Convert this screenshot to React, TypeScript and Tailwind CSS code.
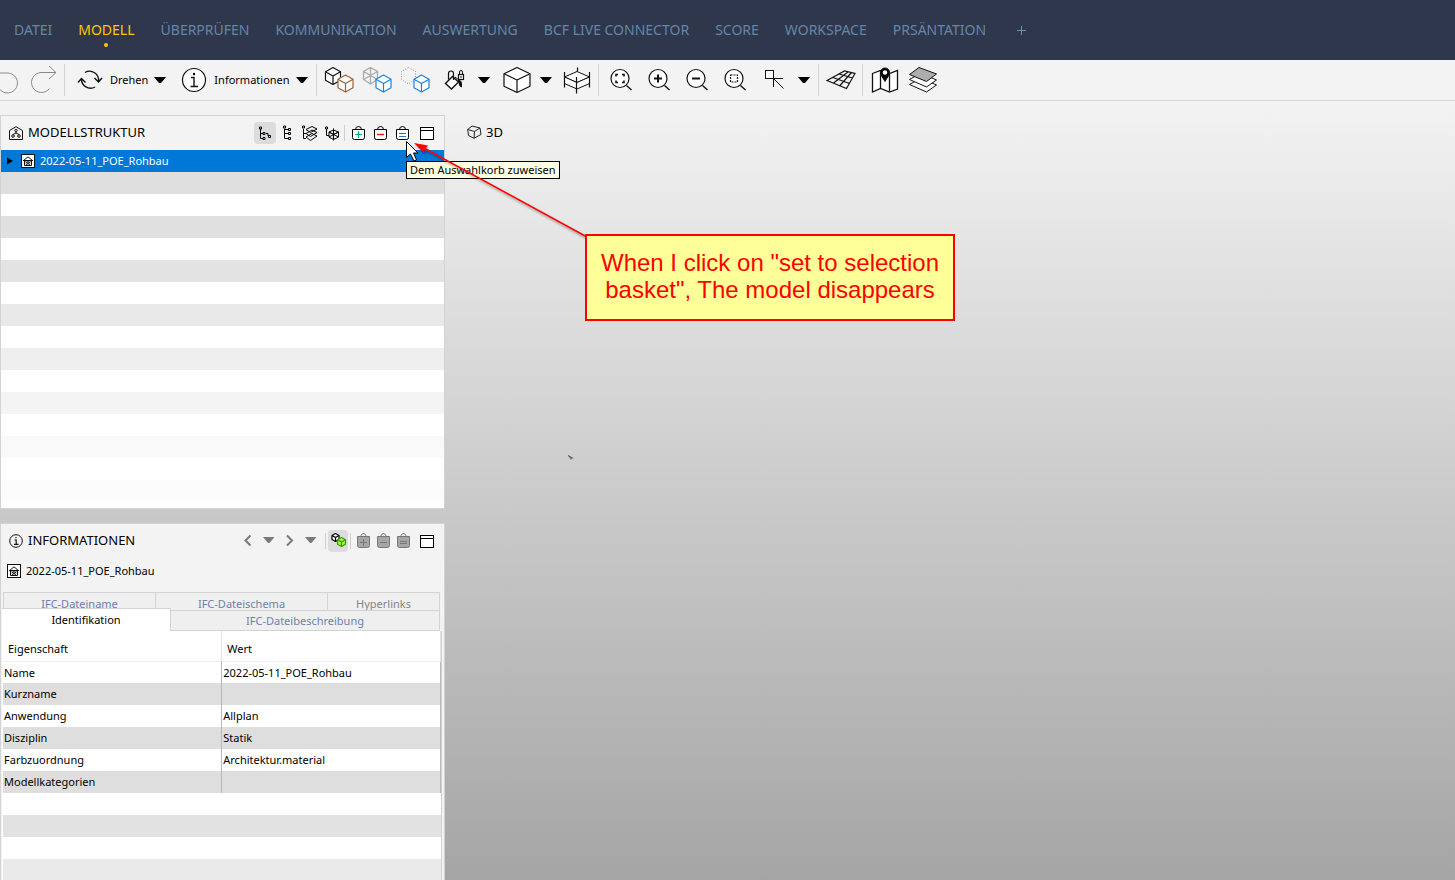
import React from "react";

interface CellProps {
  label: string;
  width?: number;
  className?: string;
  children: React.ReactNode;
}

// toolbar button: the icon is drawn on a 40px high cell
const ToolButton: React.FC<CellProps> = ({ label, width = 38, children }) => (
  <button type="button" aria-label={label} className="shrink-0 hover:bg-gray-200">
    <svg width={width} height={40} viewBox={`0 0 ${width} 40`} fill="none" stroke="#111">
      {children}
    </svg>
  </button>
);

const PanelButton: React.FC<CellProps> = ({ label, width = 22, className = "", children }) => (
  <button type="button" aria-label={label} className={`shrink-0 ${className}`}>
    <svg width={width} height={22} viewBox={`0 0 ${width} 22`} fill="none" stroke="#000">
      {children}
    </svg>
  </button>
);

const Separator = () => (
  <div className="flex h-8 w-1.5 shrink-0 justify-center">
    <div className="w-px bg-[#d3d3d3]" />
  </div>
);

const PanelSeparator = () => (
  <div className="flex h-4 w-[5px] shrink-0 justify-center">
    <div className="w-px bg-[#cfcfcf]" />
  </div>
);

const Caret = () => (
  <svg width={24} height={40} viewBox="0 0 24 40">
    <path d="M6 17h12l-5 6h-2z" fill="#000" />
  </svg>
);

const CaretButton = ({ label }: { label: string }) => (
  <button type="button" aria-label={label} className="shrink-0">
    <Caret />
  </button>
);

// isometric cube around cx / cy
const Cube = ({ cx, cy, w, h, color, fill = "#fff" }: { cx: number; cy: number; w: number; h: number; color: string; fill?: string }) => (
  <g stroke={color} fill={fill} strokeLinejoin="round" strokeWidth="1.2">
    <path d={`M${cx} ${cy - h}L${cx + w} ${cy - h / 2}V${cy + h / 2}L${cx} ${cy + h}L${cx - w} ${cy + h / 2}V${cy - h / 2}Z`} />
    <path d={`M${cx - w} ${cy - h / 2}L${cx} ${cy}L${cx + w} ${cy - h / 2}M${cx} ${cy}V${cy + h}`} fill="none" />
  </g>
);

const Lens = () => (
  <>
    <circle cx="18" cy="18.5" r="9" fill="#fff" strokeWidth="1.2" />
    <path d="M24.5 25.5L29.5 30" strokeWidth="1.4" />
  </>
);

const HouseIcon = () => (
  <svg width={14} height={14} viewBox="0 0 14 14" fill="none" stroke="#111" className="shrink-0">
    <rect x=".5" y=".5" width="13" height="13" fill="#fff" />
    <path d="M2 7L7 2.8L12 7M3.5 6.5V11.5H10.5V6.5M3 6.5H11M5 9.5A2 1.8 0 0 1 9 9.5M4.5 11.5L9.5 7.5M9.5 11.5L4.5 7.5" />
  </svg>
);

const WindowIcon = () => (
  <>
    <rect x="4.5" y="5.5" width="13" height="12" fill="#fff" />
    <path d="M4.5 8.5H17.5" />
  </>
);

const Bag = ({ children }: { children: React.ReactNode }) => (
  <>
    <path d="M5.5 7.5H17.5V15.5Q17.5 17.5 15.5 17.5H7.5Q5.5 17.5 5.5 15.5Z" fill="#fff" />
    <path d="M8.5 7.5Q8.5 4.5 11.5 4.5Q14.5 4.5 14.5 7.5" />
    {children}
  </>
);

const GreyBag = ({ d }: { d: string }) => (
  <g stroke="#777">
    <path d="M4.5 6.5H16.5V15.5Q16.5 17.5 14.5 17.5H6.5Q4.5 17.5 4.5 15.5Z" fill="#a6a6a6" />
    <path d="M7.5 6.5Q8.5 3.5 10.5 3.5Q12.5 3.5 13.5 6.5" />
    <path d={d} />
  </g>
);

const menuItems = [
  "DATEI",
  "MODELL",
  "ÜBERPRÜFEN",
  "KOMMUNIKATION",
  "AUSWERTUNG",
  "BCF LIVE CONNECTOR",
  "SCORE",
  "WORKSPACE",
  "PRSÄNTATION",
];

const treeRows = [
  "bg-[#dedede]",
  "bg-white",
  "bg-[#e0e0e0]",
  "bg-white",
  "bg-[#e3e3e3]",
  "bg-white",
  "bg-[#e9e9e9]",
  "bg-white",
  "bg-[#efefef]",
  "bg-white",
  "bg-[#f4f4f4]",
  "bg-white",
  "bg-[#f9f9f9]",
  "bg-white",
  "bg-[#fcfcfc]",
];

const properties = [
  { name: "Name", value: "2022-05-11_POE_Rohbau" },
  { name: "Kurzname", value: "" },
  { name: "Anwendung", value: "Allplan" },
  { name: "Disziplin", value: "Statik" },
  { name: "Farbzuordnung", value: "Architektur.material" },
  { name: "Modellkategorien", value: "" },
];

const MainMenu = () => (
  <nav className="flex h-[60px] shrink-0 items-center gap-[26px] bg-[#2f374c] px-3.5 text-[14px] leading-5 text-[#6486a5]">
    {menuItems.map((item) => (
      <a
        key={item}
        href="#"
        className={`relative whitespace-nowrap ${item === "MODELL" ? "text-[#ffc800]" : ""}`}
      >
        {item}
        {item === "MODELL" && (
          <span className="absolute top-full left-1/2 mt-[3px] size-1 -translate-x-1/2 rounded-full bg-[#ffc800]" />
        )}
      </a>
    ))}
    <button type="button" aria-label="Hinzufügen" className="ml-1">
      <svg width={11} height={11} viewBox="0 0 11 11" stroke="#6f8fb0">
        <path d="M5.5 1V10M1 5.5H10" />
      </svg>
    </button>
  </nav>
);

const Toolbar = () => (
  <div className="shrink-0 overflow-hidden border-b border-[#d6d6d6] bg-[#f3f3f3]">
    <div className="-ml-[15px] flex h-10 items-center">
      <ToolButton label="Rückgängig">
        <path d="M15 6L8 13L15 20M8 13H23A10 10 0 1 1 14.5 29" stroke="#8a8a8a" />
      </ToolButton>
      <ToolButton label="Wiederholen">
        <path d="M26 6L33 12.5L26 19M33 12.5H18A10 10 0 1 0 26.5 28.5" stroke="#8a8a8a" />
      </ToolButton>
      <Separator />
      <button type="button" className="flex shrink-0 items-center">
        <svg width={38} height={40} viewBox="0 0 38 40" fill="none" stroke="#111" strokeWidth="1.4">
          <path d="M18 12.5A9 9 0 0 1 31.5 21.5M27.5 18L31.5 22L35 18" />
          <path d="M28 27A9 9 0 0 1 14.5 19M11 22.5L14.5 18.5L18.5 22.5" />
        </svg>
        <span className="ml-[5px]">Drehen</span>
        <Caret />
      </button>
      <button type="button" className="flex shrink-0 items-center">
        <svg width={38} height={40} viewBox="0 0 38 40" fill="none" stroke="#111">
          <circle cx="22" cy="20" r="11.5" fill="#fff" strokeWidth="1.2" />
          <path d="M19 17.5H22V26M18.5 26.5H26" strokeWidth="1.4" />
          <circle cx="22" cy="14" r="1.2" fill="#000" stroke="none" />
        </svg>
        <span className="ml-1">Informationen</span>
        <Caret />
      </button>
      <Separator />
      <ToolButton label="Komponenten anzeigen">
        <Cube cx={13} cy={16} w={7.5} h={8.5} color="#111" />
        <Cube cx={25.5} cy={23.5} w={7.5} h={8.5} color="#9a6233" />
      </ToolButton>
      <ToolButton label="Transparent anzeigen">
        <g stroke="#ababab">
          <path d="M12.5 7.5L19.5 11.5V19.5L12.5 24L5.5 19.5V11.5ZM12.5 7.5V24M5.5 11.5L19.5 19.5M19.5 11.5L5.5 19.5" strokeWidth="1.3" />
        </g>
        <Cube cx={25.5} cy={23.5} w={7.5} h={8.5} color="#1b83dc" />
      </ToolButton>
      <ToolButton label="Ausblenden">
        <path d="M12.5 7.5L19.5 11.5V19.5L12.5 24L5.5 19.5V11.5Z" stroke="#999" strokeDasharray="1 1.5" />
        <Cube cx={25.5} cy={23.5} w={7.5} h={8.5} color="#1b83dc" />
      </ToolButton>
      <ToolButton label="Einfärben">
        <path d="M11.5 23.5L18.5 16.5L24.5 22L17.5 29Z" fill="#fff" strokeWidth="1.4" />
        <path d="M14.5 19.5V13.5Q14.5 11 17 11Q19.5 11 19.5 13.5V20" strokeWidth="1.2" />
        <path d="M21 17L25 20M24.5 20Q28 20 27.5 27Q25 26.500 25 22Z" fill="#000" />
        <rect x="24.5" y="14.5" width="5" height="5" fill="#fff" strokeWidth="1.2" />
        <path d="M25.5 14V12Q25.5 10.5 27 10.5Q28.5 10.5 28.5 12V14M27 16V18" />
      </ToolButton>
      <CaretButton label="Farboptionen" />
      <ToolButton label="Ansichtswürfel">
        <Cube cx={21} cy={20} w={13} h={12.5} color="#111" />
      </ToolButton>
      <CaretButton label="Ansichten" />
      <ToolButton label="Schnittebene">
        <path d="M6.5 17L19 11.5L31.5 17L19 22.5Z" fill="#fff" />
        <path d="M6.5 17V23.5L19 29L31.5 23.5V17L19 22.5Z" fill="#fff" />
        <path d="M6.5 12V27.5M31.5 12V27.5M18.5 17V33.5M19.5 7.5V11.5" strokeWidth="1.2" />
      </ToolButton>
      <Separator />
      <ToolButton label="Alles zoomen">
        <Lens />
        <path d="M14 16.5V14.500H16M20 14.500H22V16.5M22 20.5V22.500H20M16 22.500H14V20.5" strokeWidth="1.6" />
      </ToolButton>
      <ToolButton label="Vergrößern">
        <Lens />
        <path d="M14 18.5H22M18 14.5V22.5" strokeWidth="2" />
      </ToolButton>
      <ToolButton label="Verkleinern">
        <Lens />
        <path d="M14 18.5H22" strokeWidth="2" />
      </ToolButton>
      <ToolButton label="Auswahl zoomen">
        <Lens />
        <rect x="14.5" y="15" width="7" height="7" strokeDasharray="2 1" strokeWidth="1.2" />
      </ToolButton>
      <ToolButton label="Auswählen">
        <rect x="11.5" y="10.5" width="8" height="8" fill="#fff" />
        <path d="M19.5 27V18.5H29M19.5 18.5L29.5 28.5" />
      </ToolButton>
      <CaretButton label="Auswahlmodus" />
      <Separator />
      <ToolButton label="Raster">
        <path d="M5 20.5L22.5 11L33 13.5L24.500 28.5ZM11 17.5L27.5 23.500M17 14L30.5 18M11.500 23L26 12M18 25.5L29.5 12.5" strokeWidth="1.2" />
      </ToolButton>
      <Separator />
      <ToolButton label="Karte">
        <path d="M6.5 13.5L14.5 10.5L23.5 13.5L31.5 10.5V29L23.5 32L14.5 28.5L6.5 32Z" fill="#fff" strokeWidth="1.3" />
        <path d="M14.5 11V28.5M23.5 13.5V31.5" strokeWidth="1.3" />
        <path d="M19 21.5C17 17.5 14.5 16 14.5 12.5A4.5 4.5 0 0 1 23.5 12.5C23.5 16 21 17.5 19 21.5Z" fill="#000" />
        <circle cx="19" cy="12.5" r="2.2" fill="#fff" stroke="none" />
      </ToolButton>
      <ToolButton label="Ebenen">
        <path d="M5.5 24.500L22.5 32L32.5 25L17 18Z" fill="#fff" />
        <path d="M5.5 19.5L22.5 27L32.5 20L17 13Z" fill="#fff" />
        <path d="M5.5 14.5L15 7.5L32.5 14L22.5 21.5Z" fill="#adadad" />
      </ToolButton>
    </div>
  </div>
);

const ModelPanel = () => (
  <section className="shrink-0 border border-[#d3d3d3] bg-[#f3f3f3]">
    <header className="flex h-[34px] items-center pr-1.5 pl-2">
      <svg width={14} height={14} viewBox="0 0 14 14" fill="none" stroke="#111">
        <path d="M.5 13.5V4.5L7 .7L13.5 4.5V13.5Z" />
        <circle cx="7" cy="4.5" r="1.2" />
        <circle cx="4" cy="10" r="1.3" />
        <circle cx="10" cy="10" r="1.3" />
        <path d="M7 6V7.5M4 8.5L7 7L10 8.5" />
      </svg>
      <h2 className="ml-[5px] flex-1 text-[13px]">MODELLSTRUKTUR</h2>
      <PanelButton label="Containment" className="rounded-sm bg-[#dcdcdc]">
        <path d="M6.5 7V16.5H9M6.5 11.5H9M12 11.5H14V14M5.500 5H7.500V7H5.500ZM9 10.500H11V12.500H9ZM9 15.500H11V17.500H9ZM14.500 13.500H16.500V15.500H14.500Z" />
      </PanelButton>
      <PanelButton label="Ebenenstruktur">
        <path d="M8.5 6.5V16.5H12M8.5 11.5H12M8.5 7.5H12M7.500 4H9.500V6H7.500ZM12.5 6.500H14.500V8.500H12.5ZM12.5 10.5H14.500V12.5H12.5ZM12.5 15.500H14.500V17.500H12.5Z" />
      </PanelButton>
      <PanelButton label="Layerstruktur">
        <path d="M5.5 7V16.5H8M5.5 11.5H8M4.500 4H6.500V6H4.500Z" />
        <path d="M8 15L14 11.5L19 14L12.5 18.5ZM8 11.5L14 8L19 10.5L12.5 14.5ZM8 7.5L14 4.5L19 7L12.5 10.5Z" fill="#f3f3f3" />
      </PanelButton>
      <PanelButton label="Systemstruktur">
        <path d="M6.5 7V13.5H9M5.500 5H7.500V7H5.500Z" />
        <path d="M9 10L13.5 8L18.5 10V15L13.5 17.5L9 15ZM9 10L13.5 12.5L18.5 10M13.5 6.5V18.5M9 15L18.5 10M9 10L18.5 15" />
      </PanelButton>
      <PanelSeparator />
      <PanelButton label="Zum Auswahlkorb hinzufügen">
        <Bag>
          <path d="M8 12.5H15M11.5 9V16" stroke="#00b368" strokeWidth="1.2" />
        </Bag>
      </PanelButton>
      <PanelButton label="Aus Auswahlkorb entfernen">
        <Bag>
          <path d="M8 12.5H15" stroke="#f01414" strokeWidth="1.4" />
        </Bag>
      </PanelButton>
      <PanelButton label="Dem Auswahlkorb zuweisen">
        <Bag>
          <path d="M8 11.5H15M8 14.5H15" stroke="#2272c9" />
        </Bag>
      </PanelButton>
      <PanelButton label="Fenster" className="ml-[3px]">
        <WindowIcon />
      </PanelButton>
    </header>
    <ul className="bg-white pb-[6px]">
      <li className="flex h-[22px] items-center bg-[#0078d7] pl-1.5 text-white">
        <svg width={6} height={8} viewBox="0 0 6 8" className="mr-2">
          <path d="M0 .5L6 4L0 7.5Z" fill="#000" />
        </svg>
        <HouseIcon />
        <span className="ml-[5px]">2022-05-11_POE_Rohbau</span>
      </li>
      {treeRows.map((color, i) => (
        <li key={i} className={`h-[22px] ${color}`} />
      ))}
    </ul>
  </section>
);

const InfoPanel = () => (
  <section className="min-h-0 flex-1 overflow-hidden border border-b-0 border-[#d3d3d3] bg-[#f3f3f3]">
    <header className="flex h-[34px] items-center pr-1.5 pl-2">
      <svg width={14} height={14} viewBox="0 0 14 14" fill="none" stroke="#111">
        <circle cx="7" cy="7" r="6.3" />
        <path d="M5.5 6H7.2V10M5 10.3H9.5M7 3V4.3" strokeWidth="1.2" />
      </svg>
      <h2 className="ml-[5px] flex-1 text-[13px]">INFORMATIONEN</h2>
      <div className="mr-0.5 flex">
        <PanelButton label="Zurück" width={21}>
          <path d="M13.5 5.5L8.500 10.5L13.5 15.5" stroke="#7a7a7a" strokeWidth="2" />
        </PanelButton>
        <PanelButton label="Verlauf zurück" width={21}>
          <path d="M5 7H16.5L11.5 13H10Z" fill="#7a7a7a" stroke="none" />
        </PanelButton>
        <PanelButton label="Vor" width={21}>
          <path d="M8 5.5L13 10.5L8 15.5" stroke="#7a7a7a" strokeWidth="2" />
        </PanelButton>
        <PanelButton label="Verlauf vor" width={21}>
          <path d="M5 7H16.5L11.5 13H10Z" fill="#7a7a7a" stroke="none" />
        </PanelButton>
      </div>
      <PanelSeparator />
      <PanelButton label="Auswahl folgen" width={20} className="rounded-sm bg-[#dcdcdc]">
        <Cube cx={7.5} cy={7.5} w={3.5} h={4} color="#000" />
        <Cube cx={13.5} cy={12} w={4} h={4.5} color="#3c9a00" fill="#9dff3c" />
      </PanelButton>
      <PanelSeparator />
      <PanelButton label="Hinzufügen" width={20}>
        <GreyBag d="M7 12.5H14M10.5 9V16" />
      </PanelButton>
      <PanelButton label="Entfernen" width={20}>
        <GreyBag d="M7 12.5H14" />
      </PanelButton>
      <PanelButton label="Zuweisen" width={20}>
        <GreyBag d="M7 11.5H14M7 13.5H14" />
      </PanelButton>
      <PanelButton label="Fenster" className="ml-[3px]">
        <WindowIcon />
      </PanelButton>
    </header>
    <div className="mb-2 flex h-[26px] items-center pl-1.5">
      <HouseIcon />
      <span className="ml-[5px]">2022-05-11_POE_Rohbau</span>
    </div>

    {/* Registerkarten */}
    <div className="mr-1 ml-0.5 flex h-[18px] border-t border-r border-[#d3d3d3] bg-[#efefef] text-[#6f7fae]">
      <button type="button" className="w-[152px] border-l border-[#d3d3d3] pt-[3px]">IFC-Dateiname</button>
      <button type="button" className="w-[172px] border-l border-[#d3d3d3] pt-[3px]">IFC-Dateischema</button>
      <button type="button" className="flex-1 border-l border-[#d3d3d3] pt-[3px] text-[#858585]">Hyperlinks</button>
    </div>
    <div className="mr-1 ml-px flex h-[21px]">
      <button type="button" className="relative -mt-0.5 h-[23px] w-[169px] border-t border-r border-[#d3d3d3] bg-white">
        Identifikation
      </button>
      <button type="button" className="flex-1 border-t border-r border-b border-[#d3d3d3] bg-[#efefef] pt-0.5 text-[#6f7fae]">
        IFC-Dateibeschreibung
      </button>
    </div>

    <div className="mr-0.5 ml-px h-full border-r border-[#d3d3d3] bg-white pl-px">
      <table className="w-full table-fixed border-collapse text-left">
        <thead>
          <tr className="h-[30px] border-b border-[#ededed]">
            <th className="border-r border-[#e2e2e2] pt-1.5 pl-[5px] font-normal">Eigenschaft</th>
            <th className="border-r border-[#e2e2e2] pt-1.5 pl-[5px] font-normal">Wert</th>
          </tr>
        </thead>
        <tbody>
          {properties.map((p) => (
            <tr key={p.name} className="h-[22px] even:bg-[#dedede]">
              <td className="border-r border-[#b9b9b9] pt-px pl-px">{p.name}</td>
              <td className="border-r border-[#b9b9b9] pt-px pl-px">{p.value}</td>
            </tr>
          ))}
        </tbody>
      </table>
      <div className="h-[22px]" />
      <div className="h-[22px] bg-[#e2e2e2]" />
      <div className="h-[22px]" />
      <div className="h-[22px] bg-[#eaeaea]" />
    </div>
  </section>
);

const Annotation = () => (
  <>
    <div className="absolute top-[60px] left-[406px] border border-black bg-[#ffffe1] px-[3px] leading-4 whitespace-nowrap">
      Dem Auswahlkorb zuweisen
    </div>
    <svg className="pointer-events-none absolute top-0 left-[400px]" width={200} height={150} viewBox="0 0 200 150" fill="none">
      <path d="M6.5 40.5V56.5L10.5 53L14 60L16.5 59L13.5 52H18Z" fill="#fff" stroke="#000" />
      <g style={{ filter: "drop-shadow(1px 2px 1px rgba(0,0,0,.35))" }}>
        <path d="M22 46L187 136" stroke="#f00" strokeWidth="1.6" />
        <path d="M14 42L28 44.5L25 48L24 52Z" fill="#f00" />
      </g>
    </svg>
    <div className="absolute top-[133px] left-[585px] border-2 border-[#f00] bg-[#ffff99] px-3.5 pt-[13px] pb-4 text-center font-['Liberation_Sans',Arial,sans-serif] text-[24px] leading-[27px] whitespace-nowrap text-[#f00]">
      When I click on "set to selection
      <br />
      basket", The model disappears
    </div>
  </>
);

const App = () => (
  <div className="flex h-screen flex-col overflow-hidden font-['Noto_Sans','Open_Sans',sans-serif] text-[11px] text-black">
    <MainMenu />
    <Toolbar />
    <main className="relative flex min-h-0 flex-1 bg-linear-to-b from-[#f3f3f3] to-[#a5a5a5]">
      <aside className="flex w-[445px] shrink-0 flex-col gap-3.5 pt-3.5">
        <ModelPanel />
        <InfoPanel />
      </aside>
      <section className="min-w-0 flex-1 px-[22px] pt-[21px]">
        <h2 className="flex items-center gap-1 text-[13px] leading-5">
          <svg width={15} height={14} viewBox="0 0 15 14" fill="none" stroke="#222">
            <path d="M.7 4.5L5 1L13 3L14 9.5L7 13.3L1.5 10.5ZM.7 4.5L7.5 6.5L13 3M7.5 6.5L7 13.3" strokeLinejoin="round" />
          </svg>
          3D
        </h2>
        <svg className="mt-[312px] ml-[100px]" width={8} height={8} viewBox="0 0 8 8">
          <path d="M1 1L7 4L3.5 6Z" fill="#8b8b8b" />
          <path d="M1 1.5L5 4" stroke="#555" />
        </svg>
      </section>
      <Annotation />
    </main>
  </div>
);

export default App;
